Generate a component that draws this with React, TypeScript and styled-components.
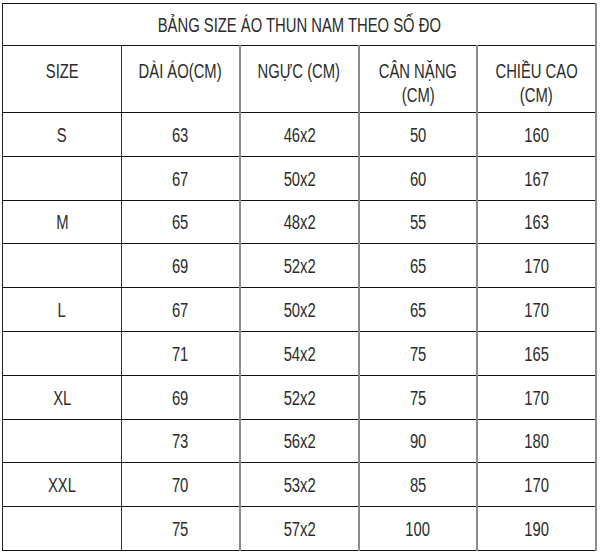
import React from 'react';
import styled, { createGlobalStyle } from 'styled-components';

const GlobalStyle = createGlobalStyle`
  html, body {
    margin: 0;
    padding: 0;
    background: #ffffff;
  }
`;

const Page = styled.div`
  width: 600px;
  height: 554px;
  padding: 3px 0 0 2px;
  box-sizing: border-box;
  background: #fff;
  font-family: "Liberation Sans", Arial, sans-serif;
  color: #2c2c2c;
`;

const SizeTable = styled.table`
  width: 595px;
  border-collapse: collapse;
  table-layout: fixed;
  border-left: 1px solid #222;
  border-right: 2px solid #8c8c8c;
`;

// the picture uses a narrow face (Arial Narrow), so squeeze Liberation Sans
const Narrow = styled.span`
  display: inline-block;
  transform: scaleX(0.74);
  transform-origin: center;
  white-space: nowrap;
`;

const TitleCell = styled.th`
  height: 42px;
  padding: 2px 0 0;
  box-sizing: border-box;
  border-top: 1px solid #111;
  border-bottom: 1px solid #111;
  font-size: 20px;
  font-weight: normal;
  text-align: center;
  vertical-align: middle;
`;

const HeadCell = styled.th<{ $first?: boolean; $dark?: boolean }>`
  height: 67px;
  padding: 13px 0 0;
  box-sizing: border-box;
  border-bottom: 1px solid #111;
  border-left: ${(p) => (p.$first ? 'none' : p.$dark ? '1px solid #333' : '2px solid #8c8c8c')};
  font-size: 20px;
  font-weight: normal;
  line-height: 24px;
  text-align: center;
  vertical-align: top;
`;

const Cell = styled.td<{ $first?: boolean; $dark?: boolean }>`
  height: 43.8px;
  padding: 2px 0 0;
  box-sizing: border-box;
  border-bottom: 1px solid #111;
  border-left: ${(p) => (p.$first ? 'none' : p.$dark ? '1px solid #333' : '2px solid #8c8c8c')};
  font-size: 20px;
  text-align: center;
  vertical-align: middle;
`;

const headers = ['SIZE', 'DÀI ÁO(CM)', 'NGỰC (CM)', 'CÂN NẶNG\n(CM)', 'CHIỀU CAO\n(CM)'];

const rows: [string, string, string, string, string][] = [
  ['S', '63', '46x2', '50', '160'],
  ['', '67', '50x2', '60', '167'],
  ['M', '65', '48x2', '55', '163'],
  ['', '69', '52x2', '65', '170'],
  ['L', '67', '50x2', '65', '170'],
  ['', '71', '54x2', '75', '165'],
  ['XL', '69', '52x2', '75', '170'],
  ['', '73', '56x2', '90', '180'],
  ['XXL', '70', '53x2', '85', '170'],
  ['', '75', '57x2', '100', '190'],
];

export default function App() {
  return (
    <Page>
      <GlobalStyle />
      <SizeTable>
        <thead>
          <tr>
            <TitleCell colSpan={5}>
              <Narrow>BẢNG SIZE ÁO THUN NAM THEO SỐ ĐO</Narrow>
            </TitleCell>
          </tr>
          <tr>
            {headers.map((h, i) => (
              <HeadCell key={h} $first={i === 0} $dark={i === 1}>
                {h.split('\n').map((line) => (
                  <div key={line}>
                    <Narrow>{line}</Narrow>
                  </div>
                ))}
              </HeadCell>
            ))}
          </tr>
        </thead>
        <tbody>
          {rows.map((r, ri) => (
            <tr key={ri}>
              {r.map((v, ci) => (
                <Cell key={ci} $first={ci === 0} $dark={ci === 1}>
                  <Narrow>{v}</Narrow>
                </Cell>
              ))}
            </tr>
          ))}
        </tbody>
      </SizeTable>
    </Page>
  );
}
